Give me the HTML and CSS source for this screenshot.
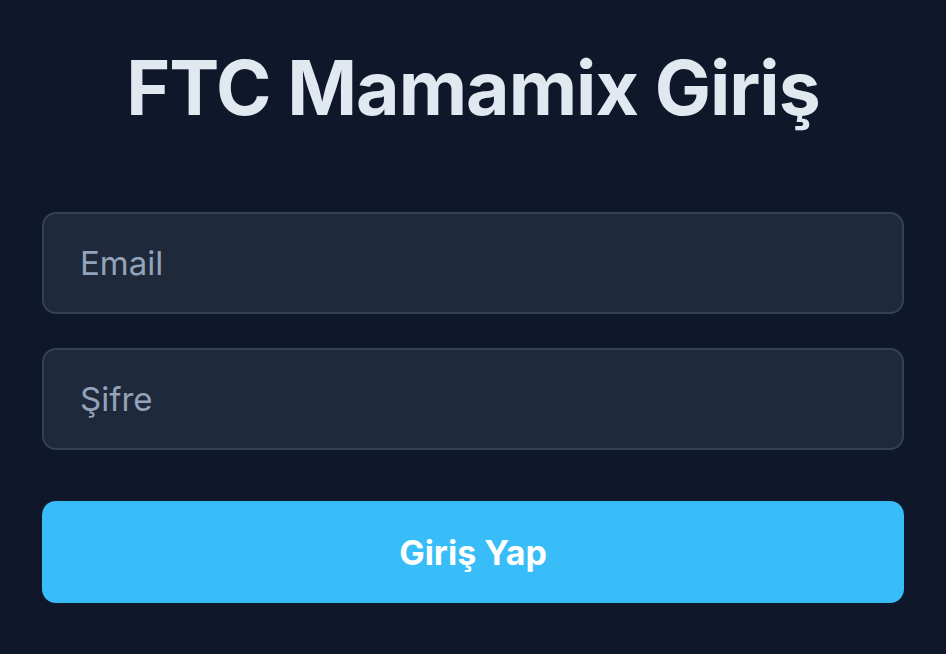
FILE: index.html
```html
<!DOCTYPE html>
<html lang="tr">
<head>
  <meta charset="UTF-8" />
  <meta name="viewport" content="width=device-width, initial-scale=1.0"/>
  <title>FTC Mamamix Giriş</title>
  <link rel="stylesheet" href="styles.css">
</head>
<body>
  <div class="login">
    <h1>FTC Mamamix Giriş</h1>

    <form class="login-form" onsubmit="return false">
      <input type="email" placeholder="Email" />
      <input type="password" placeholder="Şifre" />
      <button type="submit">Giriş Yap</button>
    </form>
  </div>
</body>
</html>
```

FILE: styles.css
```css
:root {
  --bg: #0f172a;
  --field-bg: #1e293b;
  --field-border: #334155;
  --accent: #38bdf8;
  --text: #e2e8f0;
  --muted: #94a3b8;
}

body {
  margin: 0;
  background: var(--bg);
  color: var(--text);
  font-family: Inter, 'Noto Sans', sans-serif;
}

.login {
  padding: 41px 42px 0;
}

h1 {
  margin: 0 0 77px;
  font-size: 75px;
  line-height: 94px;
  font-weight: 700;
  letter-spacing: -1px;
  text-align: center;
  color: var(--text);
}

.login-form {
  display: flex;
  flex-direction: column;
  gap: 34px;
}

.login-form input {
  box-sizing: border-box;
  width: 100%;
  height: 102px;
  padding: 0 36px;
  background: var(--field-bg);
  border: 2px solid var(--field-border);
  border-radius: 14px;
  font-family: inherit;
  font-size: 33px;
  color: var(--text);
  outline: none;
}

.login-form input::placeholder {
  color: var(--muted);
}

.login-form button {
  margin-top: 17px;
  height: 102px;
  border: none;
  border-radius: 14px;
  background: var(--accent);
  color: white;
  font-family: inherit;
  font-size: 34px;
  font-weight: 700;
  cursor: pointer;
}
```
